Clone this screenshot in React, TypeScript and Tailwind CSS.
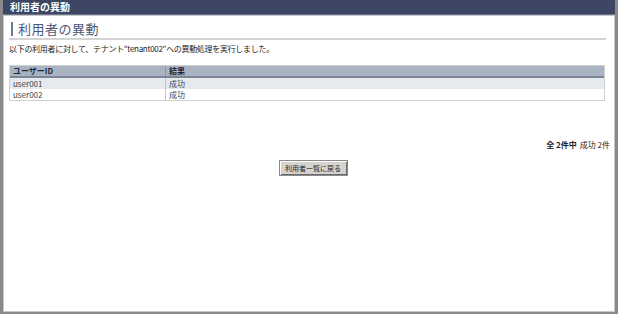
import React from 'react';

const rows = [
  { id: 'user001', result: '成功' },
  { id: 'user002', result: '成功' },
];

const App: React.FC = () => {
  return (
    <div
      className="w-[618px] h-[314px] bg-[#8a8a8a] p-[0_3px_2px_3px] flex flex-col"
      style={{ fontFamily: '"Noto Sans CJK JP", "Noto Sans", sans-serif' }}
    >
      {/* Title bar */}
      <div className="h-[15px] bg-[#3d4763] border-b border-[#6c7590] flex items-center px-[7px]">
        <span className="text-white text-[10px] font-bold leading-none">利用者の異動</span>
      </div>

      <div className="flex-1 bg-white border border-[#c8c8c8] px-[5px] flex flex-col">
        {/* Heading */}
        <div className="mt-[5px] mr-[3px] border-b-2 border-[#d4d4d4] pb-[1px] flex items-center">
          <div className="w-[2px] h-[14px] bg-[#6a7898] ml-[2px] mr-[5px]" />
          <h1 className="text-[13px] leading-[16px] text-[#4a5878] tracking-[0.5px]">利用者の異動</h1>
        </div>

        <p className="mt-[4px] text-[8px] leading-[10px] text-[#222] tracking-[-0.3px]">
          以下の利用者に対して、テナント"tenant002"への異動処理を実行しました。
        </p>

        {/* Result table */}
        <div className="mt-[11px] mr-[4px] border border-[#d0d0d0]">
          <div className="flex bg-[#a9b3c2] border-b-2 border-[#7b8597] h-[12px] items-center text-[8px] font-bold text-[#1f2a3c]">
            <div className="w-[156px] pl-[3px] border-r border-[#8e98a8] h-full flex items-center">ユーザーID</div>
            <div className="flex-1 pl-[3px]">結果</div>
          </div>
          {rows.map((r, i) => (
            <div
              key={r.id}
              className={`flex h-[11px] items-center text-[8px] text-[#444] ${i === 0 ? 'bg-[#e6eaef]' : 'bg-white'}`}
            >
              <div className="w-[156px] pl-[3px] border-r border-[#c4c4c4] h-full flex items-center">{r.id}</div>
              <div className="flex-1 pl-[3px]">{r.result}</div>
            </div>
          ))}
        </div>

        {/* Summary */}
        <div className="mt-[38px] -mr-[1px] flex justify-end items-baseline gap-[3px] text-[8px] text-[#222]">
          <span className="font-bold">全 2件中</span>
          <span>成功 2件</span>
        </div>

        <div className="mt-[9px] flex justify-center">
          <button className="ml-[8px] w-[69px] h-[16px] bg-[#d6d3ce] border border-[#8a8a8a] shadow-[inset_1px_1px_0_#fff,inset_-1px_-1px_0_#6a6a6a] text-[7px] text-[#222] flex items-center justify-center">
            利用者一覧に戻る
          </button>
        </div>
      </div>
    </div>
  );
};

export default App;
